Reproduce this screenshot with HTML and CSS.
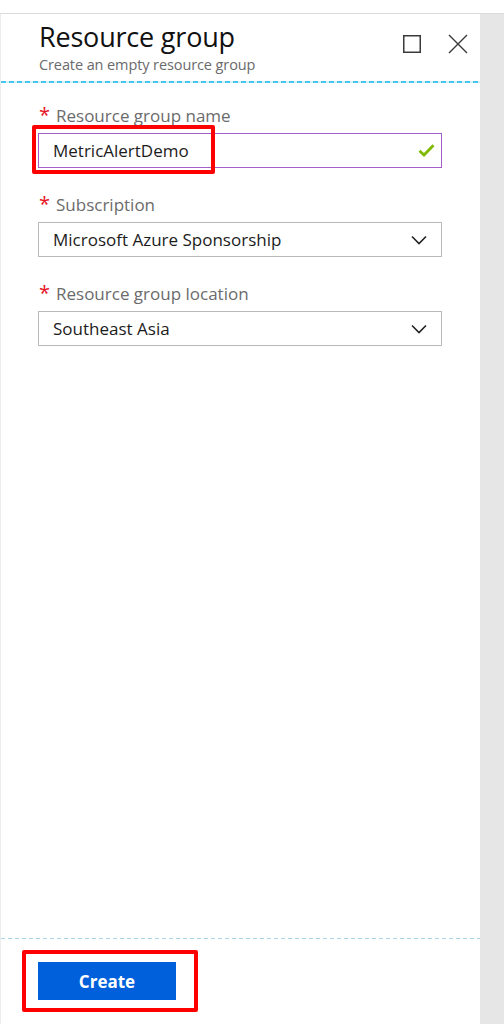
FILE: index.html
```html
<!DOCTYPE html>
<html lang="en">
<head>
<meta charset="utf-8">
<title>Resource group</title>
<link rel="stylesheet" href="styles.css">
</head>
<body>
<div class="frame">
  <section class="blade">
    <header class="blade-header">
      <div class="titles">
        <h1 class="title">Resource group</h1>
        <p class="subtitle">Create an empty resource group</p>
      </div>
      <div class="controls">
        <svg class="ctl" width="20" height="20" viewBox="0 0 20 20"><rect x="1.75" y="1.75" width="16.5" height="16.5" fill="none" stroke="#3a3a3a" stroke-width="1.5"/></svg>
        <svg class="ctl" width="20" height="20" viewBox="0 0 20 20"><path d="M1 1 L19 19 M19 1 L1 19" fill="none" stroke="#3a3a3a" stroke-width="1.4"/></svg>
      </div>
    </header>
    <div class="dash-top"></div>
    <form class="form">
      <div class="field">
        <label class="label"><span class="req">*</span>Resource group name</label>
        <div class="input-wrap">
          <div class="input valid">
            <span class="value">MetricAlertDemo</span>
            <svg class="check" width="17" height="13" viewBox="0 0 17 13"><path d="M1.5 6.8 L6 11 L15.5 1.3" fill="none" stroke="#7fba00" stroke-width="2.8"/></svg>
          </div>
          <div class="highlight hl-input"></div>
        </div>
      </div>
      <div class="field">
        <label class="label"><span class="req">*</span>Subscription</label>
        <div class="input select">
          <span class="value">Microsoft Azure Sponsorship</span>
          <svg class="chev" width="16" height="10" viewBox="0 0 16 10"><path d="M1 1.5 L8 8.5 L15 1.5" fill="none" stroke="#222" stroke-width="1.6"/></svg>
        </div>
      </div>
      <div class="field">
        <label class="label"><span class="req">*</span>Resource group location</label>
        <div class="input select">
          <span class="value">Southeast Asia</span>
          <svg class="chev" width="16" height="10" viewBox="0 0 16 10"><path d="M1 1.5 L8 8.5 L15 1.5" fill="none" stroke="#222" stroke-width="1.6"/></svg>
        </div>
      </div>
    </form>
    <footer class="footer">
      <div class="btn-wrap">
        <button class="btn" type="button">Create</button>
        <div class="highlight hl-btn"></div>
      </div>
    </footer>
  </section>
  <div class="gutter"></div>
</div>
</body>
</html>
```

FILE: styles.css
```css
* { box-sizing: border-box; }
html, body { margin: 0; padding: 0; background: #ffffff; }
body {
  padding-top: 13px;
  font-family: "Open Sans", "Noto Sans", "Liberation Sans", sans-serif;
  color: #1e1e1e;
}
.frame {
  display: flex;
  height: 1011px;
  border-top: 1px solid #dcdcdc;
}
.blade {
  width: 480px;
  display: flex;
  flex-direction: column;
  border-left: 1px solid #ececec;
  background: #fff;
}
.gutter {
  flex: 1;
  background: #e6e6e6;
}
.blade-header {
  display: flex;
  justify-content: space-between;
  padding: 5px 0 0 38px;
  height: 67px;
}
.title {
  margin: 0;
  font-size: 27px;
  font-weight: 400;
  line-height: 36px;
  color: #111;
  letter-spacing: -0.2px;
}
.subtitle {
  margin: 0;
  font-size: 14.5px;
  line-height: 20px;
  color: #6a6a6a;
  letter-spacing: -0.1px;
}
.controls {
  display: flex;
  gap: 26px;
  padding: 15px 12px 0 0;
}
.ctl { display: block; }
.dash-top {
  height: 2px;
  background: repeating-linear-gradient(to right, #48c6ee 0 5px, #d6eff8 5px 8px);
}
.form {
  flex: 1;
  padding: 21px 38px 0 37px;
  display: flex;
  flex-direction: column;
  gap: 25px;
}
.field {
  display: flex;
  flex-direction: column;
  gap: 5px;
}
.label {
  font-size: 17px;
  line-height: 24px;
  color: #6b6b6b;
  display: flex;
  align-items: baseline;
}
.req {
  color: #e81123;
  font-size: 20px;
  width: 18px;
  padding-left: 1px;
  line-height: 20px;
}
.input-wrap { position: relative; }
.input {
  height: 35px;
  width: 404px;
  border: 1px solid #b9b9b9;
  display: flex;
  align-items: center;
  justify-content: space-between;
  padding: 0 13px 0 14px;
  font-size: 17px;
  color: #1c1c1c;
}
.input.valid { border-color: #a160c8; padding-right: 6px; }
.chev { margin-right: 1px; }
.highlight {
  position: absolute;
  border: 4px solid #ff0000;
  border-radius: 2px;
  pointer-events: none;
}
.hl-input {
  left: -6px;
  top: -8px;
  width: 183px;
  height: 49px;
}
.footer {
  height: 87px;
  border-top: 1px solid transparent;
  background-image: repeating-linear-gradient(to right, #a7d7e6 0 4px, transparent 4px 7px);
  background-size: 100% 1px;
  background-repeat: no-repeat;
  background-position: top left;
  padding: 24px 0 0 37px;
}
.btn-wrap {
  position: relative;
  width: 138px;
}
.btn {
  display: block;
  width: 138px;
  height: 38px;
  border: 0;
  background: #005fdb;
  color: #fff;
  font-family: "Open Sans", "Noto Sans", sans-serif;
  font-size: 17px;
  font-weight: 700;
  padding: 0;
}
.hl-btn {
  left: -16px;
  top: -12px;
  width: 176px;
  height: 62px;
}
```
